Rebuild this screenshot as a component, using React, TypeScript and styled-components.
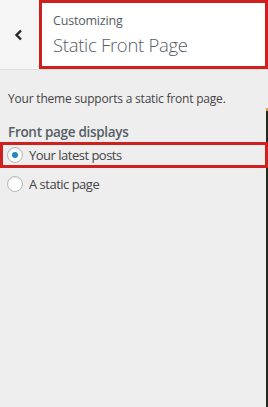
import React from 'react';
import styled, { createGlobalStyle } from 'styled-components';

const GlobalStyle = createGlobalStyle`
  html, body {
    margin: 0;
    padding: 0;
    background: #eeeeee;
  }
  body {
    font-family: "Open Sans", "Liberation Sans", sans-serif;
    color: #444444;
  }
`;

const Frame = styled.div`
  display: flex;
  width: 268px;
  height: 407px;
  overflow: hidden;
`;

const Sidebar = styled.div`
  flex: 1;
  display: flex;
  flex-direction: column;
  min-width: 0;
`;

const PreviewEdge = styled.div`
  width: 2px;
  margin-top: 108px;
  background: #1d2b19;
  border-top: 3px solid #e6a23a;
`;

const Header = styled.div`
  display: flex;
  height: 69px;
  background: #f5f5f5;
  border-bottom: 1px solid #dddddd;
  margin-right: -2px;
`;

const BackButton = styled.button`
  width: 39px;
  display: flex;
  align-items: center;
  justify-content: center;
  padding: 0 2px 0 0;
  border: 0;
  background: transparent;
`;

const TitleBox = styled.div<{ $mark?: boolean }>`
  flex: 1;
  display: flex;
  flex-direction: column;
  justify-content: center;
  padding: 0 0 0 11px;
  background: #ffffff;
  border: 3px solid ${(p) => (p.$mark ? '#cf1f1f' : 'transparent')};
`;

const Eyebrow = styled.span`
  font-size: 12.5px;
  line-height: 18px;
  letter-spacing: -0.2px;
  color: #555d66;
`;

const Title = styled.h1`
  margin: 3px 0 0;
  font-size: 18.5px;
  font-weight: 300;
  line-height: 24px;
  letter-spacing: -0.3px;
  color: #555d66;
`;

const Body = styled.div`
  display: flex;
  flex-direction: column;
  padding-top: 20px;
`;

const Description = styled.p`
  margin: 0 0 16px 8px;
  font-size: 12px;
  line-height: 17px;
  letter-spacing: -0.2px;
  color: #444444;
`;

const GroupLabel = styled.div`
  margin: 0 0 0 8px;
  font-size: 13.5px;
  font-weight: 600;
  line-height: 19px;
  letter-spacing: -0.3px;
  color: #555d66;
`;

const Option = styled.label<{ $mark?: boolean }>`
  position: relative;
  z-index: 1;
  display: flex;
  align-items: center;
  gap: 6px;
  height: 26px;
  margin-right: -2px;
  margin-bottom: 3px;
  padding-left: ${(p) => (p.$mark ? '4px' : '7px')};
  border: ${(p) => (p.$mark ? '3px solid #cf1f1f' : '0')};
  box-sizing: border-box;
  font-size: 13px;
  letter-spacing: -0.5px;
  color: #444444;
`;

const Radio = styled.span<{ $checked?: boolean }>`
  width: 14px;
  height: 14px;
  flex: none;
  border-radius: 50%;
  border: 1px solid #b4b9be;
  background: #ffffff;
  box-shadow: inset 0 1px 2px rgba(0, 0, 0, 0.1);
  display: flex;
  align-items: center;
  justify-content: center;

  &::after {
    content: '';
    width: 6px;
    height: 6px;
    border-radius: 50%;
    background: #1e8cbe;
    display: ${(p) => (p.$checked ? 'block' : 'none')};
  }
`;

const Chevron = () => (
  <svg width="9" height="12" viewBox="0 0 9 12">
    <polyline
      points="7,1.5 2.5,6 7,10.5"
      fill="none"
      stroke="#23282d"
      strokeWidth="2.4"
    />
  </svg>
);

export default function App() {
  return (
    <>
      <GlobalStyle />
      <Frame>
        <Sidebar>
          <Header>
            <BackButton aria-label="Back">
              <Chevron />
            </BackButton>
            <TitleBox $mark>
              <Eyebrow>Customizing</Eyebrow>
              <Title>Static Front Page</Title>
            </TitleBox>
          </Header>
          <Body>
            <Description>Your theme supports a static front page.</Description>
            <GroupLabel>Front page displays</GroupLabel>
            <Option $mark>
              <Radio $checked />
              Your latest posts
            </Option>
            <Option>
              <Radio />
              A static page
            </Option>
          </Body>
        </Sidebar>
        <PreviewEdge />
      </Frame>
    </>
  );
}
